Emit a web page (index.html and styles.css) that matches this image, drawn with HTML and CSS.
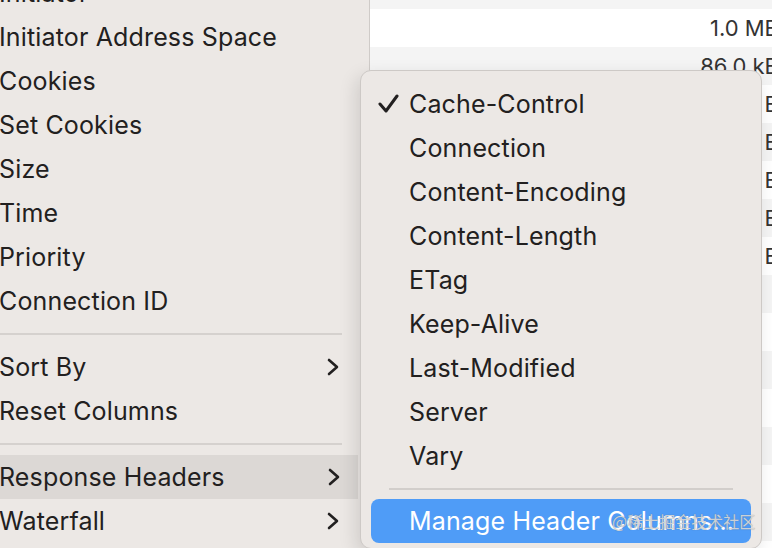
FILE: index.html
```html
<!DOCTYPE html>
<html>
<head>
<meta charset="utf-8">
<link rel="stylesheet" href="styles.css">
</head>
<body>
<div class="screen">
  <div class="menu">
    <div class="item">Initiator</div>
    <div class="item">Initiator Address Space</div>
    <div class="item">Cookies</div>
    <div class="item">Set Cookies</div>
    <div class="item">Size</div>
    <div class="item">Time</div>
    <div class="item">Priority</div>
    <div class="item">Connection ID</div>
    <div class="sep"></div>
    <div class="item">Sort By<svg class="chev" width="12" height="18" viewBox="0 0 12 18"><polyline points="2,2 10,9 2,16" /></svg></div>
    <div class="item">Reset Columns</div>
    <div class="sep"></div>
    <div class="item hl">Response Headers<svg class="chev" width="12" height="18" viewBox="0 0 12 18"><polyline points="2,2 10,9 2,16" /></svg></div>
    <div class="item">Waterfall<svg class="chev" width="12" height="18" viewBox="0 0 12 18"><polyline points="2,2 10,9 2,16" /></svg></div>
  </div>
  <div class="table">
    <div class="row odd"></div>
    <div class="row"><span>1.0 MB</span></div>
    <div class="row odd"><span>86.0 kB</span></div>
    <div class="row"><span>B</span></div>
    <div class="row odd"><span>B</span></div>
    <div class="row"><span>B</span></div>
    <div class="row odd"><span>B</span></div>
    <div class="row"><span>B</span></div>
    <div class="row odd"></div>
    <div class="row"></div>
    <div class="row odd"></div>
    <div class="row"></div>
    <div class="row odd"></div>
    <div class="row"></div>
    <div class="row odd"></div>
  </div>
  <div class="submenu">
    <div class="sitem"><svg class="check" width="22" height="20" viewBox="0 0 22 20"><polyline points="2,10 8,17 19,2" /></svg>Cache-Control</div>
    <div class="sitem">Connection</div>
    <div class="sitem">Content-Encoding</div>
    <div class="sitem">Content-Length</div>
    <div class="sitem">ETag</div>
    <div class="sitem">Keep-Alive</div>
    <div class="sitem">Last-Modified</div>
    <div class="sitem">Server</div>
    <div class="sitem">Vary</div>
    <div class="ssep"></div>
    <div class="sitem active">Manage Header Columns…</div>
  </div>
  <div class="watermark">@稀土掘金技术社区</div>
</div>
</body>
</html>
```

FILE: styles.css
```css
html, body {
  margin: 0;
  padding: 0;
  overflow: hidden;
}
body {
  width: 772px;
  height: 548px;
  font-family: Inter, "Noto Sans", "Noto Sans CJK SC", sans-serif;
  background: #ffffff;
}
.screen {
  position: relative;
  display: flex;
  width: 772px;
  height: 548px;
  overflow: hidden;
}
.menu {
  width: 370px;
  flex: none;
  margin-top: -29px;
  background: #ece8e5;
  border-right: 1px solid #cfcbc8;
  box-sizing: border-box;
  color: #222020;
  font-size: 25px;
  letter-spacing: 0.15px;
}
.item {
  height: 44px;
  display: flex;
  align-items: center;
  justify-content: space-between;
  padding-right: 18px;
  width: 358px;
  box-sizing: border-box;
  margin-left: -1px;
}
.item.hl {
  background: #dcd8d5;
  margin-left: 0;
  text-indent: -1px;
}
.chev {
  flex: none;
}
.chev polyline {
  fill: none;
  stroke: #222020;
  stroke-width: 2.6;
  stroke-linecap: round;
  stroke-linejoin: round;
}
.sep {
  height: 22px;
  display: flex;
  align-items: center;
  width: 342px;
}
.sep::before {
  content: "";
  display: block;
  width: 100%;
  height: 2px;
  background: #d5d1ce;
}
.table {
  flex: 1;
  display: flex;
  flex-direction: column;
  font-size: 22px;
  color: #333333;
}
.row {
  flex: none;
  height: 38px;
  display: flex;
  align-items: center;
  justify-content: flex-end;
  margin-right: -7px;
  background: #ffffff;
}
.row:first-child {
  height: 9px;
}
.row.odd {
  background: #f4f4f4;
}
.submenu {
  position: absolute;
  left: 360px;
  top: 70px;
  width: 402px;
  box-sizing: border-box;
  padding: 11px 10px 5px 10px;
  background: #ece8e5;
  border: 1px solid #cdc9c6;
  border-radius: 11px;
  box-shadow: -4px 6px 18px rgba(0, 0, 0, 0.12);
  color: #222020;
  font-size: 25px;
  letter-spacing: 0.15px;
}
.sitem {
  position: relative;
  height: 44px;
  display: flex;
  align-items: center;
  padding-left: 38px;
  border-radius: 8px;
}
.check {
  position: absolute;
  left: 7px;
  top: 12px;
}
.check polyline {
  fill: none;
  stroke: #222020;
  stroke-width: 3;
  stroke-linecap: round;
  stroke-linejoin: round;
}
.ssep {
  height: 21px;
  display: flex;
  align-items: center;
  padding: 0 18px;
}
.ssep::before {
  content: "";
  display: block;
  width: 100%;
  height: 2px;
  background: #d2cecb;
}
.sitem.active {
  background: #4f9cf7;
  color: #ffffff;
}
.watermark {
  position: absolute;
  left: 612px;
  top: 509px;
  font-size: 16px;
  color: rgba(225, 225, 225, 0.85);
  text-shadow: 0 0 1px rgba(90, 90, 90, 0.6);
  font-family: "Noto Sans CJK SC", sans-serif;
  white-space: nowrap;
}
```
